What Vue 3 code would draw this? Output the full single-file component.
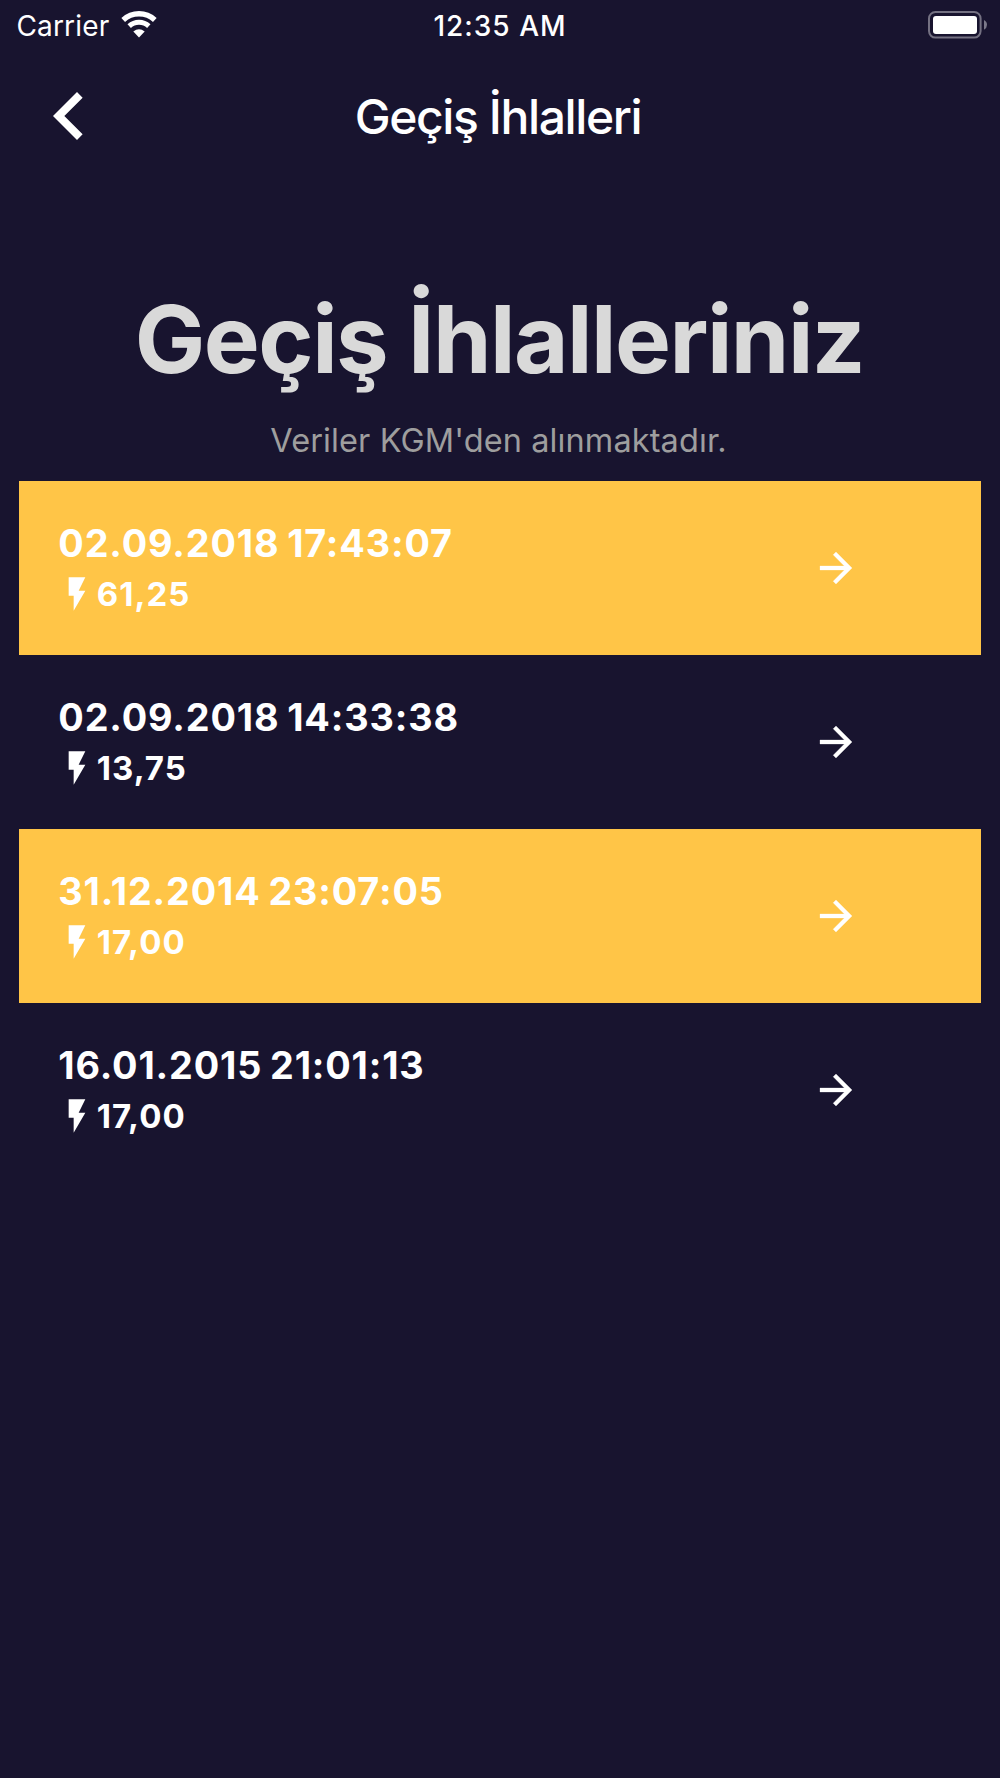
<template>
  <main class="screen">
    <div class="status-bar">
      <div class="status-left">
        <span class="carrier">Carrier</span>
        <svg class="wifi" viewBox="0 0 38 28">
          <path d="M3.2 9.9A23.2 23.2 0 0 1 34.8 9.9" fill="none" stroke="#fff" stroke-width="5.4" />
          <path d="M9.2 16.1A14.4 14.4 0 0 1 28.8 16.1" fill="none" stroke="#fff" stroke-width="5" />
          <path d="M19 27.4L13.3 21.6Q19 16.8 24.7 21.6Z" fill="#fff" />
        </svg>
      </div>
      <div class="status-time">12:35 AM</div>
      <div class="status-right">
        <svg class="battery" viewBox="0 0 60 28">
          <rect x="1" y="1" width="51.6" height="25.6" rx="6.5" fill="none" stroke="#747182" stroke-width="2" />
          <rect x="5" y="5" width="44" height="18" rx="3" fill="#fff" />
          <path d="M56 9Q59 10.6 59 13.8Q59 17 56 18.8Z" fill="#7b798a" />
        </svg>
      </div>
    </div>

    <header class="nav-bar">
      <button class="back" aria-label="Geri">
        <svg viewBox="0 0 24 24"><path d="M15.41 7.41L14 6l-6 6 6 6 1.41-1.41L10.83 12z" fill="#fff" /></svg>
      </button>
      <div class="nav-title">Geçiş İhlalleri</div>
    </header>

    <h1 class="title">Geçiş İhlalleriniz</h1>
    <p class="subtitle">Veriler KGM'den alınmaktadır.</p>

    <ul class="list">
      <li v-for="(it, i) in items" :key="it.date" class="row" :class="{ highlighted: i % 2 === 0 }">
        <div class="info">
          <div class="date">{{ it.date }}</div>
          <div class="amount">
            <svg class="bolt" viewBox="0 0 24 24"><path d="M7 2v11h3v9l7-12h-4l4-8z" fill="#fff" /></svg>
            <span>{{ it.amount }}</span>
          </div>
        </div>
        <svg class="arrow" viewBox="0 0 24 24">
          <path d="M12 4l-1.41 1.41L16.17 11H4v2h12.17l-5.58 5.59L12 20l8-8z" fill="#fff" stroke="#fff" stroke-width="0.15" />
        </svg>
      </li>
    </ul>
  </main>
</template>

<script setup>
import { ref } from 'vue'

const items = ref([
  { date: '02.09.2018 17:43:07', amount: '61,25' },
  { date: '02.09.2018 14:33:38', amount: '13,75' },
  { date: '31.12.2014 23:07:05', amount: '17,00' },
  { date: '16.01.2015 21:01:13', amount: '17,00' }
])
</script>

<style>
body { margin: 0; background: #18142f; }
</style>

<style scoped>
.screen { min-height: 1778px; background: #18142f; color: #fff; font-family: Inter, "Liberation Sans", sans-serif; overflow: hidden; }
.status-bar { display: grid; grid-template-columns: 1fr auto 1fr; height: 52px; line-height: 52px; font-size: 28px; }
.status-left { display: flex; padding-left: 16.5px; }
.carrier { width: 103px; letter-spacing: 0.15px; }
.wifi { width: 38px; height: 28px; margin-top: 10px; }
.status-time { font-weight: 550; letter-spacing: 1px; }
.status-right { display: flex; justify-content: flex-end; }
.battery { width: 60px; height: 28px; margin: 10.5px 12px 0 0; }

.nav-bar { display: grid; grid-template-columns: 96px 1fr 96px; height: 128px; padding: 0 21px; align-items: center; }
.back { width: 96px; height: 96px; padding: 0; border: none; background: transparent; }
.back svg { width: 96px; height: 96px; display: block; }
.nav-title { padding: 1px 4px 0 0; text-align: center; font-size: 48px; line-height: 58px; font-weight: 530; letter-spacing: -1.4px; }

.title { margin: 99px 1px 0 0; text-align: center; font-size: 94px; line-height: 120px; font-weight: 700; letter-spacing: -1.5px; color: #d9d9d9; }
.subtitle { margin: 20px 3px 0 0; text-align: center; font-size: 32.5px; line-height: 44px; letter-spacing: 0.1px; color: #9e9e9e; }

.list { list-style: none; margin: 17.5px 19.3px 0; padding: 0; }
.row { display: flex; align-items: center; justify-content: space-between; box-sizing: border-box; height: 174px; padding: 0 121px 0 39px; }
.row.highlighted { background: #ffc547; }
.info { padding-top: 3px; }
.date { font-size: 37.8px; line-height: 49px; font-weight: 700; letter-spacing: 0.85px; word-spacing: -2px; }
.amount { display: flex; align-items: center; height: 52px; margin-left: -1.5px; font-size: 33px; font-weight: 700; letter-spacing: 1px; }
.bolt { width: 40px; height: 40px; margin-top: 1.5px; }
.arrow { width: 48px; height: 48px; }
</style>
